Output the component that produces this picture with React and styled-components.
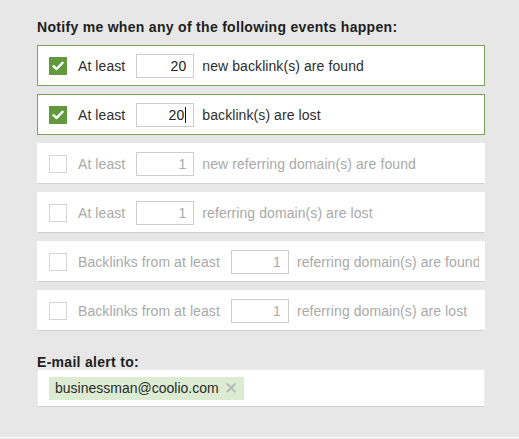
import React from 'react';
import styled, { createGlobalStyle } from 'styled-components';

const GlobalStyle = createGlobalStyle`
  html, body {
    margin: 0;
    padding: 0;
    background: #e7e7e7;
    font-family: "Liberation Sans", Arial, sans-serif;
  }
`;

const Page = styled.div`
  width: 519px;
  height: 438px;
  box-sizing: border-box;
  padding: 19px 34px 0 37px;
  border-bottom: 1px solid #fff;
`;

const Heading = styled.h2`
  margin: 0 0 10px;
  font-size: 14px;
  line-height: 16px;
  letter-spacing: 0.3px;
  font-weight: bold;
  color: #1e1e1e;
`;

const EventList = styled.div`
  display: flex;
  flex-direction: column;
  gap: 8px;
`;

const Row = styled.div`
  display: flex;
  align-items: center;
  height: 41px;
  box-sizing: border-box;
  padding: 0 5px 0 11px;
  background: #fff;
  overflow: hidden;
  white-space: nowrap;
  font-size: 14px;
  letter-spacing: 0.08px;
  color: ${(p) => (p.$on ? '#2e2e2e' : '#a9a9a9')};
  border: 1px solid ${(p) => (p.$on ? '#7aa25c' : '#fff')};
  border-bottom-color: ${(p) => (p.$on ? '#7aa25c' : '#cfcfcf')};
`;

const Check = styled.span`
  flex: none;
  width: 18px;
  height: 18px;
  box-sizing: border-box;
  display: flex;
  align-items: center;
  justify-content: center;
  margin-right: 11px;
  background: ${(p) => (p.$on ? '#62993d' : '#fff')};
  border: 1px solid ${(p) => (p.$on ? '#62993d' : '#d4d4d4')};
`;

const Label = styled.span`
  margin-right: 11px;
`;

const Count = styled.span`
  flex: none;
  width: 58px;
  height: 24px;
  box-sizing: border-box;
  margin-right: 8px;
  padding-right: 7px;
  border: 1px solid #cdcdcd;
  display: flex;
  align-items: center;
  justify-content: flex-end;
  font-size: 14px;
  color: ${(p) => (p.$on ? '#222' : '#a9a9a9')};
`;

const Caret = styled.span`
  display: inline-block;
  width: 1px;
  height: 16px;
  margin-left: 1px;
  background: #111;
`;

const Text = styled.span`
  min-width: 0;
  overflow: hidden;
`;

const Sub = styled.h3`
  margin: 24px 0 0;
  font-size: 14px;
  line-height: 14px;
  letter-spacing: 0.3px;
  font-weight: bold;
  color: #1e1e1e;
`;

const EmailBox = styled.div`
  display: flex;
  align-items: center;
  height: 38px;
  box-sizing: border-box;
  padding: 0 11px;
  background: #fff;
  border: 1px solid #ececec;
  border-bottom-color: #cfcfcf;
`;

const Tag = styled.span`
  display: flex;
  align-items: center;
  height: 23px;
  padding: 0 6px;
  background: #dcecd2;
  font-size: 14px;
  color: #2a2a2a;
  gap: 5px;
`;

const Remove = styled.span`
  color: #b4b4b4;
  font-size: 17px;
  line-height: 1;
`;

const Tick = () => (
  <svg width="12" height="10" viewBox="0 0 12 10">
    <path d="M1.5 5.2 L4.6 8 L10.5 1.8" fill="none" stroke="#fff" strokeWidth="2.4" strokeLinecap="round" strokeLinejoin="round" />
  </svg>
);

const events = [
  { on: true, label: 'At least', value: '20', text: 'new backlink(s) are found' },
  { on: true, label: 'At least', value: '20', text: 'backlink(s) are lost', caret: true },
  { on: false, label: 'At least', value: '1', text: 'new referring domain(s) are found' },
  { on: false, label: 'At least', value: '1', text: 'referring domain(s) are lost' },
  { on: false, label: 'Backlinks from at least', value: '1', text: 'referring domain(s) are found' },
  { on: false, label: 'Backlinks from at least', value: '1', text: 'referring domain(s) are lost' },
];

export default function App() {
  return (
    <>
      <GlobalStyle />
      <Page>
        <Heading>Notify me when any of the following events happen:</Heading>
        <EventList>
          {events.map((e, i) => (
            <Row key={i} $on={e.on}>
              <Check $on={e.on}>{e.on && <Tick />}</Check>
              <Label>{e.label}</Label>
              <Count $on={e.on}>
                {e.value}
                {e.caret && <Caret />}
              </Count>
              <Text>{e.text}</Text>
            </Row>
          ))}
        </EventList>
        <Sub>E-mail alert to:</Sub>
        <EmailBox>
          <Tag>
            businessman@coolio.com
            <Remove>✕</Remove>
          </Tag>
        </EmailBox>
      </Page>
    </>
  );
}
